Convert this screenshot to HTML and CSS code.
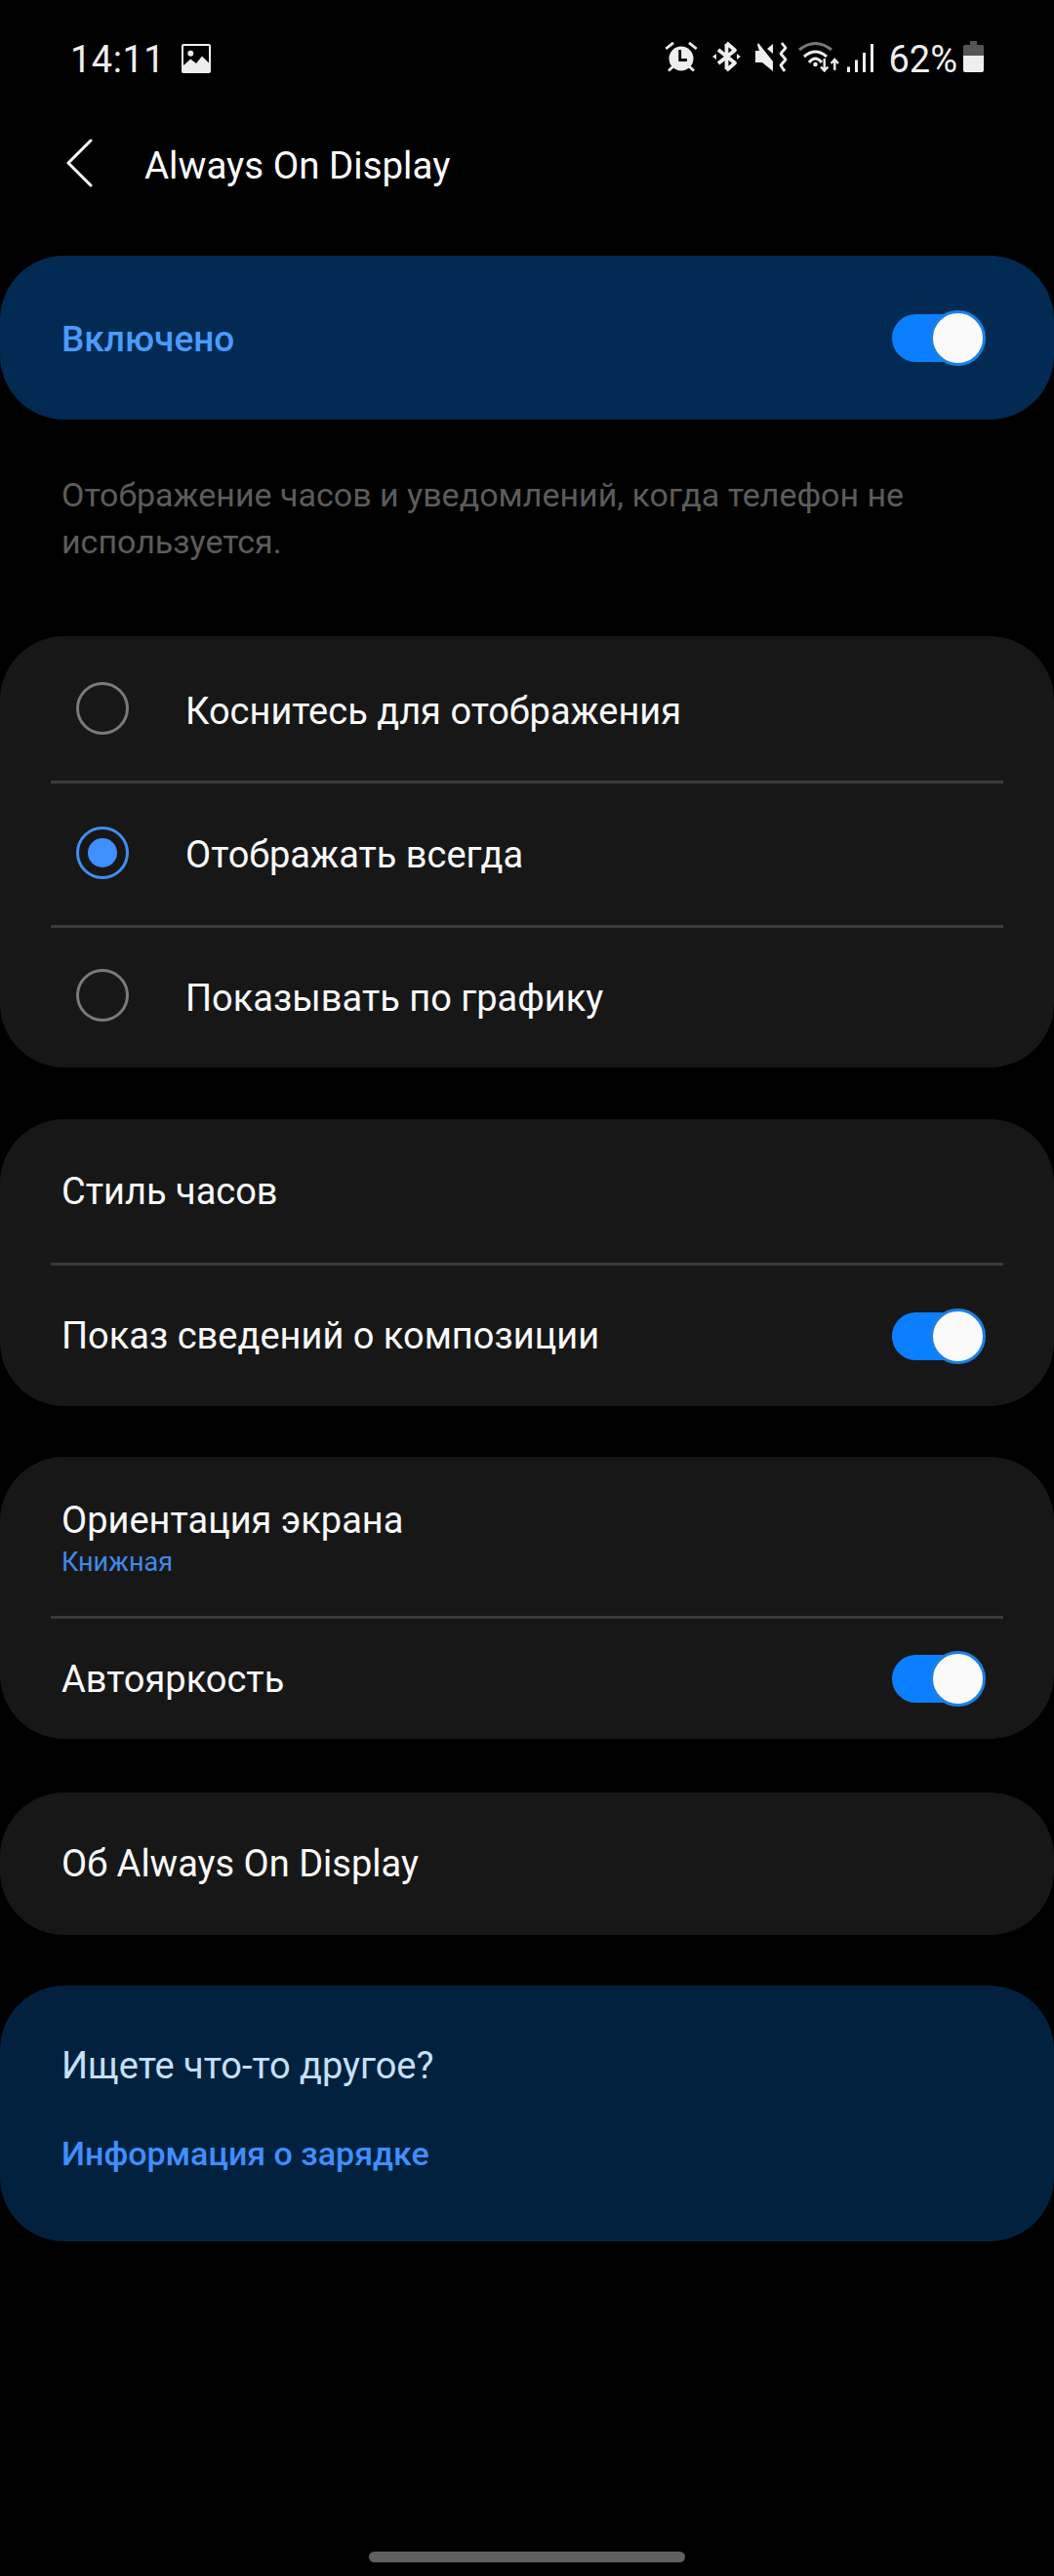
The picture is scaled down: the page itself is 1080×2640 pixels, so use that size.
FILE: index.html
```html
<!DOCTYPE html>
<html lang="ru">
<head>
<meta charset="utf-8">
<title>Always On Display</title>
<link rel="stylesheet" href="styles.css">
</head>
<body>
<div class="status">
  <div class="status-left">
    <span class="time">14:11</span>
    <svg class="ic-img" viewBox="0 0 30 30"><path fill="#eee" fill-rule="evenodd" d="M2 0h26a2 2 0 0 1 2 2v26a2 2 0 0 1-2 2H2a2 2 0 0 1-2-2V2a2 2 0 0 1 2-2zM2 2v20l7.300-6.500L15 20l6-7.500 7 7V2z"/><circle cx="9.300" cy="9.700" r="3" fill="#eee"/></svg>
  </div>
  <div class="status-right">
    <svg class="ic-alarm" viewBox="0 0 34 31"><circle cx="17" cy="17" r="12.500" fill="#eee"/><path d="M15.700 8v10.500H23" fill="none" stroke="#000" stroke-width="2.800"/><path d="M1.300 7L9 .8M32.700 7L25 .8M4 29.500l5-4.500M30 29.500L25 25" stroke="#eee" stroke-width="2.800" fill="none"/></svg>
    <svg class="ic-bt" viewBox="0 0 29 32"><path d="M14.500 3v26M14.500 2l8.500 7.500L6 23M14.500 30l8.500-7.500L6 9" fill="none" stroke="#eee" stroke-width="3.800" stroke-linejoin="round"/><path d="M4 13v6l-4-3zM25 13v6l4-3z" fill="#eee"/></svg>
    <svg class="ic-mute" viewBox="0 0 33 31"><path d="M3 1l15 19v10L7 21H0V9h4L2 3zM18 2v10l-6-5z" fill="#eee"/><path d="M27 1l4 5-5 6 5 6-5 6 4 6" fill="none" stroke="#eee" stroke-width="2.800" stroke-linejoin="round"/></svg>
    <svg class="ic-wifi" viewBox="0 0 42 32"><path d="M1 9Q17.500-4 34 9" fill="none" stroke="#777" stroke-width="3"/><path d="M6 16Q17.500 6 29 16M11 22Q17.500 14 24 22" fill="none" stroke="#eee" stroke-width="3"/><circle cx="17.500" cy="24" r="2.300" fill="#eee"/><path d="M26.700 18v12M23 26.500l3.700 4 3.700-4M37.300 30V19M33.600 23l3.700-4 3.700 4" fill="none" stroke="#eee" stroke-width="2.400"/></svg>
    <svg class="ic-signal" viewBox="0 0 27 30"><rect x="0" y="24.500" width="3" height="5.500" fill="#eee"/><rect x="8" y="17.500" width="3" height="12.500" fill="#eee"/><rect x="16" y="10" width="3" height="20" fill="#eee"/><rect x="24" y="1" width="3" height="29" fill="#eee"/></svg>
    <span class="pct">62%</span>
    <svg class="ic-bat" viewBox="0 0 21 32"><path d="M7 0h7v4h5a2 2 0 0 1 2 2v9H0V6a2 2 0 0 1 2-2h5z" fill="#555"/><path d="M0 15h21v15a2 2 0 0 1-2 2H2a2 2 0 0 1-2-2z" fill="#eee"/></svg>
  </div>
</div>

<header class="appbar">
  <svg class="back" viewBox="0 0 27 50"><path d="M25 2L2 25l23 23" fill="none" stroke="#fff" stroke-width="3" stroke-linecap="round" stroke-linejoin="round"/></svg>
  <h1 class="title">Always On Display</h1>
</header>

<main class="content">
  <section class="card master">
    <span class="master-label">Включено</span>
    <span class="switch"><span class="knob"></span></span>
  </section>

  <p class="desc">Отображение часов и уведомлений, когда телефон не используется.</p>

  <section class="card radios">
    <div class="row radio-row r1"><span class="radio"></span><span class="label">Коснитесь для отображения</span></div>
    <div class="sep"></div>
    <div class="row radio-row r2"><span class="radio on"></span><span class="label">Отображать всегда</span></div>
    <div class="sep"></div>
    <div class="row radio-row r3"><span class="radio"></span><span class="label">Показывать по графику</span></div>
  </section>

  <section class="card group-clock">
    <div class="row r-clock"><span class="label">Стиль часов</span></div>
    <div class="sep"></div>
    <div class="row r-music"><span class="label">Показ сведений о композиции</span><span class="switch"><span class="knob"></span></span></div>
  </section>

  <section class="card group-screen">
    <div class="row r-orient"><div class="stack"><span class="label">Ориентация экрана</span><span class="sub">Книжная</span></div></div>
    <div class="sep"></div>
    <div class="row r-auto"><span class="label">Автояркость</span><span class="switch"><span class="knob"></span></span></div>
  </section>

  <section class="card about">
    <div class="row r-about"><span class="label">Об Always On Display</span></div>
  </section>

  <section class="card more">
    <div class="more-title">Ищете что-то другое?</div>
    <div class="more-link">Информация о зарядке</div>
  </section>
</main>
<div class="home"></div>
</body>
</html>
```
FILE: styles.css
```css
* { box-sizing: border-box; }
html, body { margin: 0; padding: 0; background: #000; }
body { width: 1080px; height: 2640px; position: relative; overflow: hidden; font-family: Roboto, "Noto Sans", sans-serif; color: #fafafa; }

.status { height: 118px; padding: 42px 72px 0 72px; display: flex; justify-content: space-between; align-items: flex-start; color: #eee; }
.status-left { display: flex; align-items: center; gap: 17px; height: 36px; }
.time { font-size: 38px; line-height: 36px; letter-spacing: 0.5px; margin-top: 1px; }
.ic-img { width: 30px; height: 30px; }
.status-right { display: flex; align-items: flex-start; height: 36px; }
.ic-alarm { width: 34px; height: 31px; margin: 1px 15px 0 0; }
.ic-bt { width: 29px; height: 32px; margin-right: 15px; }
.ic-mute { width: 33px; height: 31px; margin: 1px 11px 0 0; }
.ic-wifi { width: 42px; height: 32px; margin-right: 8px; }
.ic-signal { width: 27px; height: 30px; margin: 2px 15px 0 0; }
.pct { font-size: 38px; line-height: 36px; margin: 1px 6px 0 0; }
.ic-bat { width: 21px; height: 32px; }

.appbar { height: 98px; display: flex; align-items: center; padding-left: 68px; }
.back { width: 27px; height: 50px; }
.title { margin: 5px 0 0 53px; font-size: 38.500px; font-weight: 400; color: #fff; }

.content { padding-top: 46px; display: flex; flex-direction: column; }
.card { border-radius: 66px; background: #171717; }
.master { height: 168px; background: #022a52; padding: 0 70px 0 63px; display: flex; align-items: center; justify-content: space-between; }
.master-label { font-size: 37px; font-weight: 500; color: #4a9bff; margin-top: 2px; }

.switch { width: 77px; height: 49px; position: relative; background: #0a7fff; border-radius: 25px; display: block; margin-right: 19px; flex: none; }
.knob { position: absolute; right: -19px; top: -4px; width: 57px; height: 57px; background: #fafafa; border: 3px solid #1a80e8; border-radius: 50%; }

.desc { margin: 0; padding: 53px 63px 0; height: 222px; width: 1000px; font-size: 34px; line-height: 48px; color: #5c5c5c; }

.row { display: flex; align-items: center; justify-content: space-between; padding: 0 70px 0 63px; }
.label { font-size: 38px; color: #fafafa; }
.sep { height: 3px; margin: 0 52px; background: #3a3a3a; }

.radios { height: 442px; }
.radio-row { justify-content: flex-start; padding-left: 78px; }
.r1 { height: 148px; }
.r2 { height: 145px; }
.r3 { height: 143px; }
.r1 .label { margin-top: 5px; }
.r2 .radio { margin-top: -3px; }
.r3 .radio { margin-top: -6px; }
.radio { width: 54px; height: 54px; border: 3px solid #7a7a7a; border-radius: 50%; margin-right: 58px; position: relative; flex: none; }
.radio.on { border-color: #3f8fef; }
.radio.on::after { content: ""; position: absolute; left: 9px; top: 9px; width: 30px; height: 30px; background: #3f8fff; border-radius: 50%; }

.group-clock { margin-top: 53px; height: 294px; }
.r-clock { height: 147px; }
.r-music { height: 144px; }

.group-screen { margin-top: 52px; height: 289px; }
.r-orient { height: 163px; }
.stack { display: flex; flex-direction: column; padding-top: 5px; }
.stack .label { line-height: 44px; }
.sub { font-size: 27px; line-height: 36px; margin-top: 3px; color: #3f8ae8; }
.r-auto { height: 123px; }

.about { margin-top: 55px; height: 146px; }
.r-about { height: 146px; }

.more { margin-top: 52px; height: 262px; background: #02213f; padding: 60px 63px 0; }
.more-title { font-size: 38px; line-height: 44px; color: #c5e0f7; }
.more-link { margin-top: 46px; font-size: 34px; line-height: 44px; font-weight: 500; color: #3f8fff; }

.home { position: absolute; left: 378px; top: 2615px; width: 324px; height: 11px; border-radius: 6px; background: #606060; }
```
